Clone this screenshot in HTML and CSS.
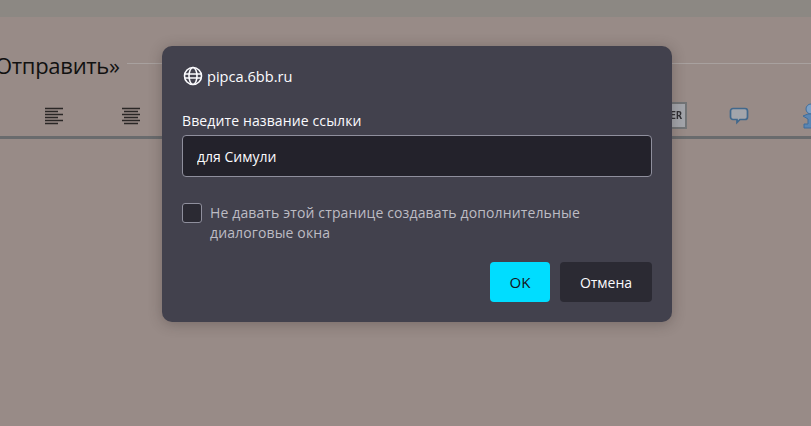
FILE: index.html
```html
<!DOCTYPE html>
<html lang="en">
<head>
    <meta charset="UTF-8">
    <meta name="viewport" content="width=device-width, initial-scale=1.0">
    <title>pipca.6bb.ru</title>
    <link rel="stylesheet" href="styles.css">
</head>
<body>
    <div class="top-strip"></div>
    <section class="page">
        <div class="send-row">
            <span class="send-text">Отправить»</span>
            <span class="send-line"></span>
        </div>
        <div class="toolbar">
            <div class="tool-group">
                <svg class="tool-icon" width="20" height="18" viewBox="0 0 20 18">
                    <path d="M1 1.500h18M1 4.500h13M1 7.500h18M1 10.500h13M1 13.500h18M1 16.500h13" stroke="#2a2726" stroke-width="1.700"/>
                </svg>
                <svg class="tool-icon" width="20" height="18" viewBox="0 0 20 18">
                    <path d="M1 1.500h18M3 4.500h14M1 7.500h18M3 10.500h14M1 13.500h18M3 16.500h14" stroke="#2a2726" stroke-width="1.700"/>
                </svg>
            </div>
            <div class="tool-group right">
                <div class="spoiler-btn">SPOILER</div>
                <svg width="20" height="20" viewBox="0 0 20 20">
                    <path d="M4 2.500h12a2.500 2.500 0 0 1 2.500 2.500v6a2.500 2.500 0 0 1-2.500 2.500h-5l-3 3v-3H4A2.500 2.500 0 0 1 1.500 11V5A2.500 2.500 0 0 1 4 2.500z" fill="#a3a5ab" stroke="#41688c" stroke-width="1.700"/>
                </svg>
                <svg class="person" width="22" height="28" viewBox="0 0 22 28">
                    <circle cx="9" cy="7" r="5" fill="#7ba0c6" stroke="#3f6d9c"/>
                    <path d="M1 14l5-2h6l5 2-3 3v5h4v4H2v-4h4v-5z" fill="#5b86b3" stroke="#3f6d9c"/>
                </svg>
            </div>
        </div>
        <div class="toolbar-line"></div>
    </section>

    <div class="dialog">
        <div class="dialog-head">
            <svg width="20" height="20" viewBox="0 0 20 20" fill="none" stroke="#fbfbfe" stroke-width="1.600">
                <circle cx="10" cy="10" r="8.500"/>
                <ellipse cx="10" cy="10" rx="4" ry="8.500"/>
                <path d="M1.500 8h17M1.500 12h17"/>
            </svg>
            <span>pipca.6bb.ru</span>
        </div>
        <label class="field-label" for="link-name">Введите название ссылки</label>
        <input class="field" id="link-name" type="text" value="для Симули">
        <label class="check-row">
            <input type="checkbox">
            <span>Не давать этой странице создавать дополнительные диалоговые окна</span>
        </label>
        <div class="dialog-buttons">
            <button class="btn-ok">OK</button>
            <button class="btn-cancel">Отмена</button>
        </div>
    </div>
</body>
</html>
```

FILE: styles.css
```css
html, body {
    margin: 0;
    padding: 0;
    height: 100%;
}
body {
    font-family: "Open Sans", "Noto Sans", sans-serif;
    background: #988b87;
    overflow: hidden;
    position: relative;
}
.top-strip {
    height: 17px;
    background: #8c8883;
}
.page {
    overflow: hidden;
}
.send-row {
    display: flex;
    align-items: center;
    height: 60px;
    margin-top: 17px;
    margin-left: -5px;
}
.send-text {
    font-size: 22px;
    color: #111;
    white-space: nowrap;
    letter-spacing: -0.3px;
    margin-top: 1px;
}
.send-line {
    flex: 1;
    height: 1px;
    margin-left: 7px;
    margin-top: -1px;
    background: #a8a19f;
}
.toolbar {
    display: flex;
    justify-content: space-between;
    align-items: center;
    height: 42px;
    box-sizing: border-box;
    padding: 2px 0 0 44px;
    margin-right: -13px;
    filter: blur(0.4px);
}
.tool-group {
    display: flex;
    align-items: center;
    gap: 57px;
}
.tool-group.right {
    gap: 41px;
}
.spoiler-btn {
    width: 72px;
    height: 27px;
    margin: -2px 1px 0 0;
    display: flex;
    align-items: center;
    justify-content: flex-end;
    padding-right: 3px;
    font-family: "DejaVu Sans Mono", monospace;
    font-size: 10px;
    font-weight: bold;
    color: #2f2f33;
    background: #a3a5ab;
    border: 2px solid #727476;
    box-sizing: border-box;
}
.person {
    margin-left: 12px;
}
.toolbar-line {
    height: 3px;
    background: #696b6d;
}

/* dialog over the page */
.dialog {
    position: absolute;
    left: 162px;
    top: 46px;
    width: 510px;
    height: 276px;
    box-sizing: border-box;
    padding: 20px 20px 20px;
    background: #42414d;
    border-radius: 10px;
    box-shadow: 0 2px 14px rgba(40, 30, 30, 0.3);
    color: #fbfbfe;
    font-size: 14px;
    display: flex;
    flex-direction: column;
}
.dialog-head {
    display: flex;
    align-items: center;
    gap: 4px;
    height: 20px;
    font-size: 14.600px;
    font-weight: 500;
}
.dialog-head svg {
    margin-left: 1px;
}
.field-label {
    margin-top: 25px;
    line-height: 20px;
    letter-spacing: 0.12px;
}
.field {
    margin-top: 4px;
    height: 42px;
    width: 100%;
    box-sizing: border-box;
    padding: 0 14px;
    font: inherit;
    color: #fbfbfe;
    background: #23222b;
    border: 1px solid #8f8f9d;
    border-radius: 4px;
    outline: none;
}
.check-row {
    display: flex;
    gap: 8px;
    margin-top: 26px;
    line-height: 20px;
    color: #bdbcc4;
    letter-spacing: 0.13px;
}
.check-row input {
    appearance: none;
    width: 20px;
    height: 20px;
    flex: none;
    margin: 0;
    background: #2b2a33;
    border: 1px solid #8f8f9d;
    border-radius: 3px;
}
.dialog-buttons {
    display: flex;
    justify-content: flex-end;
    gap: 10px;
    margin-top: auto;
}
button {
    height: 40px;
    border: none;
    border-radius: 4px;
    font: inherit;
}
.btn-ok {
    width: 60px;
    background: #00ddff;
    color: #15141a;
    font-size: 15px;
}
.btn-cancel {
    width: 92px;
    background: #2b2a33;
    color: #fbfbfe;
}
```
